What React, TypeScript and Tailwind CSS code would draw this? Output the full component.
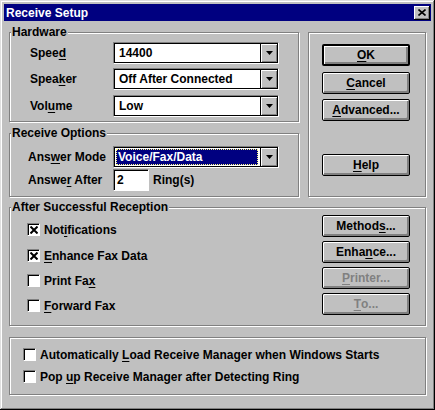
import React from 'react'

const font = { fontFamily: '"Liberation Sans", Arial, sans-serif' }

function Key({ children }: { children: React.ReactNode }) {
  return <span className="underline decoration-1 underline-offset-[2px]">{children}</span>
}

function Group({
  label,
  className,
  children,
}: {
  label?: string
  className: string
  children: React.ReactNode
}) {
  return (
    <div
      className={`relative border border-[#808080] shadow-[inset_1px_1px_0_#fff,1px_1px_0_#fff] ${className}`}
    >
      {label && (
        <span className="absolute -top-[8px] left-[1px] bg-[#c0c0c0] px-[1px] leading-[14px] text-black">
          {label}
        </span>
      )}
      {children}
    </div>
  )
}

function Arrow() {
  return (
    <svg width="7" height="4" viewBox="0 0 7 4" className="block">
      <polygon points="0,0 7,0 3.5,4" fill="#000" />
    </svg>
  )
}

function Combo({ value, selected }: { value: string; selected?: boolean }) {
  return (
    <div className="flex h-[22px] w-[166px] border border-b-white border-l-[#808080] border-r-white border-t-[#808080] bg-white shadow-[inset_1px_1px_0_#000,inset_-1px_-1px_0_#000]">
      <div className="flex flex-1 items-center p-[2px]">
        {selected ? (
          <div className="flex h-full w-full items-center border border-dotted border-[#ffff80] bg-[#000080] pl-[1px] text-white">
            {value}
          </div>
        ) : (
          <span className="pl-[3px]">{value}</span>
        )}
      </div>
      <div className="my-[1px] mr-[1px] flex w-[17px] items-center justify-center border-l border-black bg-[#c0c0c0] shadow-[inset_1px_1px_0_#fff,inset_-1px_-1px_0_#808080]">
        <Arrow />
      </div>
    </div>
  )
}

function Button({
  children,
  primary,
  disabled,
  className = '',
}: {
  children: React.ReactNode
  primary?: boolean
  disabled?: boolean
  className?: string
}) {
  return (
    <div
      className={`flex h-[22px] w-[88px] items-center justify-center rounded-[2px] border-black bg-[#c0c0c0] shadow-[inset_1px_1px_0_#fff,inset_-2px_-2px_0_#808080] ${
        primary ? 'border-2' : 'border'
      } ${disabled ? 'text-[#808080]' : 'text-black'} ${className}`}
    >
      {children}
    </div>
  )
}

function Check({ checked }: { checked?: boolean }) {
  return (
    <div className="flex h-[13px] w-[13px] shrink-0 items-center justify-center border border-b-white border-l-[#808080] border-r-white border-t-[#808080] bg-white shadow-[inset_1px_1px_0_#000]">
      {checked && (
        <svg width="8" height="8" viewBox="0 0 8 8" className="ml-[1px] mt-[1px] block">
          <path d="M0.5 0.5 L7.5 7.5 M7.5 0.5 L0.5 7.5" stroke="#000" strokeWidth="2" />
        </svg>
      )}
    </div>
  )
}

function CheckRow({ checked, children }: { checked?: boolean; children: React.ReactNode }) {
  return (
    <div className="flex h-[13px] items-center gap-[4px]">
      <Check checked={checked} />
      <span>{children}</span>
    </div>
  )
}

export default function App() {
  return (
    <div
      style={font}
      className="flex h-[410px] w-[435px] flex-col bg-[#c0c0c0] p-[4px] text-[12px] font-bold text-black shadow-[inset_-1px_-1px_0_#000,inset_1px_1px_0_#dfdfdf,inset_-2px_-2px_0_#808080,inset_2px_2px_0_#fff]"
    >
      <div className="flex h-[17px] items-center justify-between bg-[#000080] pl-[2px] pr-[1px] text-white">
        <span>Receive Setup</span>
        <div className="flex h-[14px] w-[16px] items-center justify-center bg-[#c0c0c0] shadow-[inset_-1px_-1px_0_#000,inset_1px_1px_0_#fff,inset_-2px_-2px_0_#808080]">
          <svg width="8" height="7" viewBox="0 0 8 7" className="block">
            <path d="M0.5 0.5 L7.5 6.5 M7.5 0.5 L0.5 6.5" stroke="#000" strokeWidth="1.6" />
          </svg>
        </div>
      </div>

      <div className="flex flex-col px-[5px] pt-[11px]">
        <div className="flex gap-[9px]">
          <div className="flex w-[290px] flex-col gap-[11px]">
            <Group label="Hardware" className="h-[90px]">
              <div className="flex flex-col gap-[4px] pl-[20px] pt-[9px]">
                <div className="flex items-center">
                  <span className="w-[83px]">
                    Spee<Key>d</Key>
                  </span>
                  <Combo value="14400" />
                </div>
                <div className="flex items-center">
                  <span className="w-[83px]">
                    Spea<Key>k</Key>er
                  </span>
                  <Combo value="Off After Connected" />
                </div>
                <div className="mt-[1px] flex items-center">
                  <span className="w-[83px]">
                    Vol<Key>u</Key>me
                  </span>
                  <Combo value="Low" />
                </div>
              </div>
            </Group>
            <Group label="Receive Options" className="h-[64px]">
              <div className="flex flex-col gap-[1px] pl-[18px] pt-[12px]">
                <div className="flex items-center">
                  <span className="w-[85px]">
                    Ans<Key>w</Key>er Mode
                  </span>
                  <Combo value="Voice/Fax/Data" selected />
                </div>
                <div className="flex items-center">
                  <span className="w-[85px]">
                    Answe<Key>r</Key> After
                  </span>
                  <div className="flex h-[22px] w-[36px] items-center border border-b-white border-l-[#808080] border-r-white border-t-[#808080] bg-white pl-[3px] shadow-[inset_1px_1px_0_#000]">
                    2
                  </div>
                  <span className="ml-[4px]">Ring(s)</span>
                </div>
              </div>
            </Group>
          </div>
          <Group className="h-[165px] w-[118px]">
            <div className="flex flex-col pl-[13px] pt-[11px]">
              <Button primary>
                <Key>O</Key>K
              </Button>
              <Button className="mt-[6px]">
                <Key>C</Key>ancel
              </Button>
              <Button className="mt-[5px]">
                <Key>A</Key>dvanced...
              </Button>
              <Button className="mt-[33px]">
                <Key>H</Key>elp
              </Button>
            </div>
          </Group>
        </div>

        <Group label="After Successful Reception" className="mt-[10px] h-[119px]">
          <div className="flex justify-between pr-[15px]">
            <div className="flex flex-col gap-[12px] pl-[17px] pt-[15px]">
              <CheckRow checked>
                Not<Key>i</Key>fications
              </CheckRow>
              <div className="mt-[1px]">
                <CheckRow checked>
                  <Key>E</Key>nhance Fax Data
                </CheckRow>
              </div>
              <CheckRow>
                Print Fa<Key>x</Key>
              </CheckRow>
              <CheckRow>
                <Key>F</Key>orward Fax
              </CheckRow>
            </div>
            <div className="flex flex-col gap-[4px] pt-[7px]">
              <Button>
                Method<Key>s</Key>...
              </Button>
              <Button>
                Enha<Key>n</Key>ce...
              </Button>
              <Button disabled>
                <Key>P</Key>rinter...
              </Button>
              <Button disabled>
                <Key>T</Key>o...
              </Button>
            </div>
          </div>
        </Group>

        <Group className="mt-[11px] h-[58px]">
          <div className="flex flex-col gap-[9px] pl-[13px] pt-[10px]">
            <CheckRow>
              Automatically <Key>L</Key>oad Receive Manager when Windows Starts
            </CheckRow>
            <CheckRow>
              Pop <Key>u</Key>p Receive Manager after Detecting Ring
            </CheckRow>
          </div>
        </Group>
      </div>
    </div>
  )
}
